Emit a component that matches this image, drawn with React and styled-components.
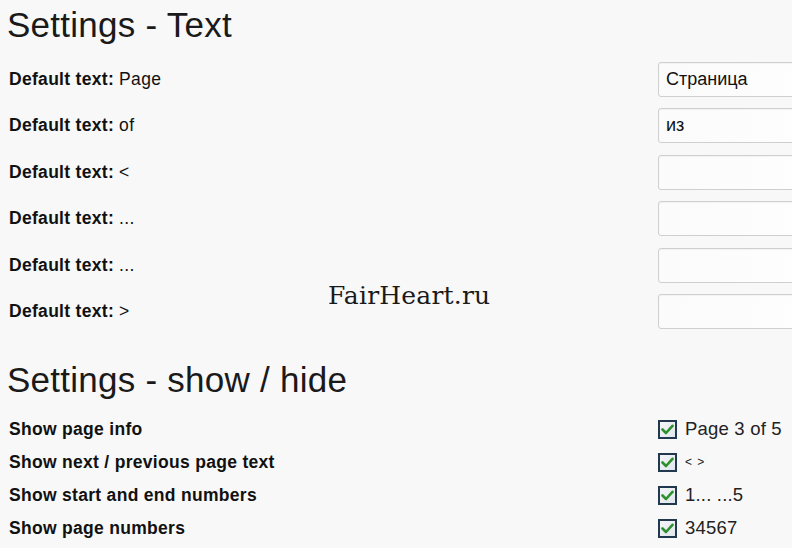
import React from "react";
import styled, { createGlobalStyle } from "styled-components";

const Global = createGlobalStyle`
  html, body {
    margin: 0;
    padding: 0;
    background: #f8f8f8;
    overflow: hidden;
  }
  body {
    font-family: "Liberation Sans", Arial, sans-serif;
    color: #111;
  }
`;

const Page = styled.div`
  position: relative;
  width: 792px;
  height: 548px;
  padding: 5px 0 0 7px;
  box-sizing: border-box;
`;

const Heading = styled.h2`
  margin: 0;
  margin-top: ${(p) => p.$top || 0}px;
  font-weight: normal;
  font-size: 35px;
  line-height: 40px;
  color: #1a1a1a;
  letter-spacing: 0.25px;
`;

const Rows = styled.div`
  display: grid;
  grid-template-columns: 649px 220px;
  row-gap: ${(p) => p.$gap}px;
  margin-top: ${(p) => p.$top}px;
  padding-left: 2px;
`;

const Label = styled.div`
  display: flex;
  align-items: center;
  height: ${(p) => p.$h}px;
  font-size: 17.5px;
  font-weight: bold;
  white-space: nowrap;
  letter-spacing: 0.3px;
`;

const Value = styled.span`
  font-weight: normal;
  margin-left: 5px;
  letter-spacing: 0.4px;
`;

const Input = styled.div`
  height: 35px;
  box-sizing: border-box;
  border: 1px solid #cfcfcf;
  border-radius: 3px;
  background: linear-gradient(90deg, #fbfbfb 0%, #ffffff 100%);
  box-shadow: inset 0 1px 1px rgba(0, 0, 0, 0.04);
  display: flex;
  align-items: center;
  padding-left: 7px;
  font-size: 18px;
  color: #111;
`;

const CheckRow = styled.div`
  display: flex;
  align-items: center;
  height: ${(p) => p.$h}px;
  gap: 8px;
`;

const Box = styled.span`
  width: 19px;
  height: 19px;
  box-sizing: border-box;
  border: 2px solid #22384f;
  background: linear-gradient(135deg, #f4f6f8 0%, #dfe6ec 100%);
  display: flex;
  align-items: center;
  justify-content: center;
  flex: none;
`;

const CheckText = styled.span`
  font-size: ${(p) => p.$size || 18.5}px;
  color: #222;
  letter-spacing: ${(p) => (p.$size ? 1 : 0.2)}px;
`;

const Watermark = styled.div`
  position: absolute;
  left: 328px;
  top: 281px;
  font-family: "DejaVu Serif", "Liberation Serif", serif;
  font-size: 25px;
  color: #1a1a1a;
  letter-spacing: 0.2px;
`;

const textRows = [
  { label: "Page", value: "Страница" },
  { label: "of", value: "из" },
  { label: "<", value: "" },
  { label: "...", value: "" },
  { label: "...", value: "" },
  { label: ">", value: "" },
];

const showRows = [
  { label: "Show page info", text: "Page 3 of 5" },
  { label: "Show next / previous page text", text: "< >", size: 12 },
  { label: "Show start and end numbers", text: "1... ...5" },
  { label: "Show page numbers", text: "34567" },
];

function Check() {
  return (
    <Box>
      <svg width="13" height="11" viewBox="0 0 13 11">
        <path d="M1.5 5.5 L5 9 L11.5 1.8" fill="none" stroke="#2f8f2f" strokeWidth="2.6" strokeLinecap="round" strokeLinejoin="round" />
      </svg>
    </Box>
  );
}

export default function App() {
  return (
    <>
      <Global />
      <Page>
        <Heading>Settings - Text</Heading>
        <Rows $gap={11.4} $top={17}>
          {textRows.map((r, i) => (
            <React.Fragment key={i}>
              <Label $h={35}>
                Default text:<Value>{r.label}</Value>
              </Label>
              <Input>{r.value}</Input>
            </React.Fragment>
          ))}
        </Rows>
        <Heading $top={31}>Settings - show / hide</Heading>
        <Rows $gap={0} $top={13}>
          {showRows.map((r, i) => (
            <React.Fragment key={i}>
              <Label $h={33}>{r.label}</Label>
              <CheckRow $h={33}>
                <Check />
                <CheckText $size={r.size}>{r.text}</CheckText>
              </CheckRow>
            </React.Fragment>
          ))}
        </Rows>
        <Watermark>FairHeart.ru</Watermark>
      </Page>
    </>
  );
}
